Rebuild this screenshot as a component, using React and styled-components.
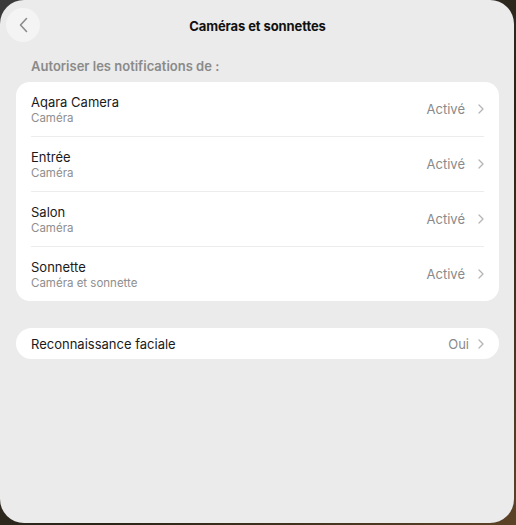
import styled, { createGlobalStyle } from 'styled-components';

const GlobalStyle = createGlobalStyle`
  html, body {
    margin: 0;
    padding: 0;
  }
  body {
    width: 516px;
    height: 525px;
    overflow: hidden;
    background: linear-gradient(135deg, #3a3a3a 0%, #2a2418 60%, #5c4226 100%);
    font-family: Inter, "Noto Sans", sans-serif;
  }
`;

const Sheet = styled.div`
  box-sizing: border-box;
  width: 514px;
  height: 523px;
  background: #ebebeb;
  border-radius: 24px;
  display: flex;
  flex-direction: column;
  padding: 9px 15px 0 16px;
  position: relative;
`;

const Header = styled.div`
  height: 34px;
  display: flex;
  align-items: center;
  justify-content: center;
  position: relative;
`;

const BackButton = styled.button`
  position: absolute;
  left: -10px;
  top: -1px;
  width: 34px;
  height: 34px;
  border-radius: 50%;
  border: none;
  background: #f4f4f4;
  display: flex;
  align-items: center;
  justify-content: center;
  padding: 0;
`;

const Title = styled.h1`
  margin: 0;
  font-size: 13px;
  font-weight: 700;
  color: #111;
  letter-spacing: -0.1px;
`;

const SectionLabel = styled.div`
  margin: 15px 0 8px 15px;
  font-size: 13px;
  font-weight: 600;
  color: #8a8a8a;
  line-height: 16px;
`;

const Card = styled.div`
  background: #fff;
  border-radius: ${(p) => (p.$pill ? '16px' : '14px')};
  margin-top: ${(p) => (p.$gap ? `${p.$gap}px` : '0')};
  padding: 0 15px;
`;

const Row = styled.div`
  display: flex;
  align-items: center;
  height: ${(p) => (p.$compact ? '31px' : '54px')};
  border-top: ${(p) => (p.$first ? 'none' : '1px solid #ececec')};
`;

const Texts = styled.div`
  flex: 1;
  display: flex;
  flex-direction: column;
  gap: 1px;
`;

const Name = styled.div`
  font-size: 13px;
  color: #1a1a1a;
  line-height: 16px;
`;

const Sub = styled.div`
  font-size: 11.5px;
  color: #8e8e8e;
  line-height: 14px;
`;

const Value = styled.div`
  font-size: 13px;
  color: #8a8a8a;
  margin-right: ${(p) => (p.$tight ? '9px' : '13px')};
`;

const Chevron = ({ size = 10, color = '#b5b5b5', width = 1.3 }) => (
  <svg width={size * 0.6} height={size} viewBox="0 0 6 10" fill="none">
    <path d="M1 1 L5 5 L1 9" stroke={color} strokeWidth={width} strokeLinecap="round" strokeLinejoin="round" />
  </svg>
);

const devices = [
  { name: 'Aqara Camera', type: 'Caméra' },
  { name: 'Entrée', type: 'Caméra' },
  { name: 'Salon', type: 'Caméra' },
  { name: 'Sonnette', type: 'Caméra et sonnette' },
];

export default function App() {
  return (
    <>
      <GlobalStyle />
      <Sheet>
        <Header>
          <BackButton aria-label="Retour">
            <svg width="9" height="16" viewBox="0 0 9 16" fill="none">
              <path d="M7.5 1.5 L1.5 8 L7.5 14.5" stroke="#8c8c8c" strokeWidth="1.6" strokeLinecap="round" strokeLinejoin="round" />
            </svg>
          </BackButton>
          <Title>Caméras et sonnettes</Title>
        </Header>
        <SectionLabel>Autoriser les notifications de :</SectionLabel>
        <Card>
          {devices.map((d, i) => (
            <Row key={d.name} $first={i === 0}>
              <Texts>
                <Name>{d.name}</Name>
                <Sub>{d.type}</Sub>
              </Texts>
              <Value>Activé</Value>
              <Chevron />
            </Row>
          ))}
        </Card>
        <Card $pill $gap={27}>
          <Row $first $compact>
            <Texts>
              <Name>Reconnaissance faciale</Name>
            </Texts>
            <Value $tight>Oui</Value>
            <Chevron />
          </Row>
        </Card>
      </Sheet>
    </>
  );
}
